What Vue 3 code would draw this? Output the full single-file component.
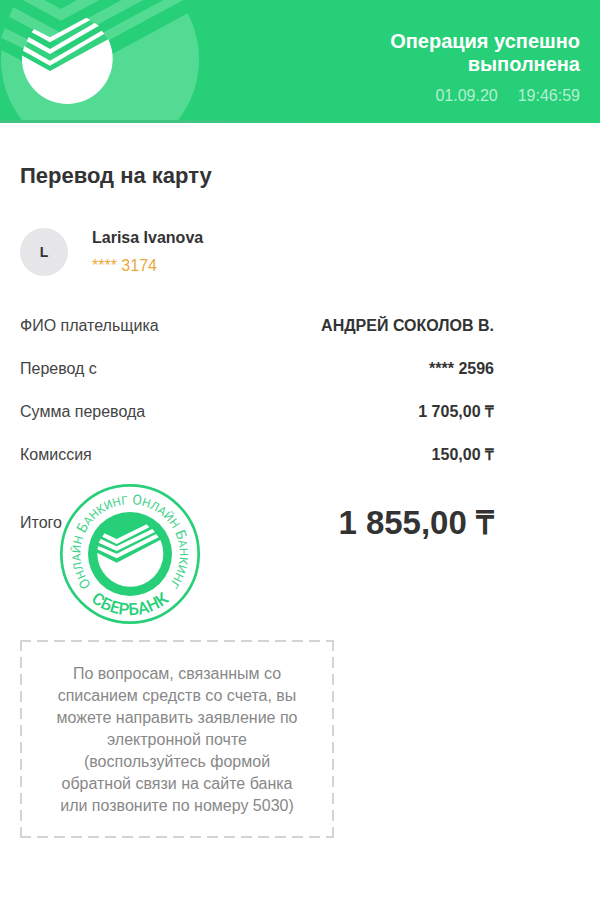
<script setup>
import { ref } from 'vue'

const receipt = ref({
  status: 'Операция успешно выполнена',
  date: '01.09.20',
  time: '19:46:59',
  title: 'Перевод на карту',
  name: 'Larisa Ivanova',
  card: '**** 3174',
  total: '1 855,00 ₸'
})

const rows = ref([
  { label: 'ФИО плательщика', value: 'АНДРЕЙ СОКОЛОВ В.' },
  { label: 'Перевод с', value: '**** 2596' },
  { label: 'Сумма перевода', value: '1 705,00 ₸' },
  { label: 'Комиссия', value: '150,00 ₸' }
])
</script>

<template>
  <main class="receipt">
    <header class="header">
      <svg class="logo" width="200" height="123" viewBox="0 0 600 369" aria-hidden="true">
        <defs>
          <clipPath id="big-circle"><circle cx="300" cy="178" r="297" /></clipPath>
          <clipPath id="small-circle"><circle cx="202" cy="176" r="136" /></clipPath>
        </defs>
        <g fill="#53db94">
          <path d="M68 0H133L183 27L230 0H298L183 62Z" />
          <path d="M40 22L183 98L365 0H430L183 133L27 50Z" />
          <path d="M14 84L183 166L490 0H550L183 198L4 114Z" />
          <path clip-path="url(#big-circle)" d="M0 148L183 245L566 38L600 20V360H0Z" />
        </g>
        <path fill="#27cf78" d="M98 88L150 113L262 53L325 118L150 213L66 168Z" opacity="0.7" />
        <g fill="#fff">
          <path d="M102 87L150 112L259 53L271 60L150 127L95 97Z" />
          <path d="M86 111L150 147L284 69L297 77L150 162L80 124Z" />
          <path d="M73 138L150 182L305 92L313 101L150 197L69 152Z" />
          <path clip-path="url(#small-circle)" d="M60 163L150 213L325 118L345 125V320H60Z" />
        </g>
      </svg>
      <div class="status">
        <h1>{{ receipt.status }}</h1>
        <p><span>{{ receipt.date }}</span><span>{{ receipt.time }}</span></p>
      </div>
    </header>

    <section class="content">
      <h2>{{ receipt.title }}</h2>

      <div class="person">
        <div class="avatar">L</div>
        <div class="person-info">
          <strong>{{ receipt.name }}</strong>
          <span>{{ receipt.card }}</span>
        </div>
      </div>

      <dl class="details">
        <div class="row" v-for="row in rows" :key="row.label">
          <dt>{{ row.label }}</dt>
          <dd>{{ row.value }}</dd>
        </div>
        <div class="row total">
          <dt>Итого</dt>
          <dd>{{ receipt.total }}</dd>
          <!-- round bank stamp, lies over the total row -->
          <svg class="stamp" width="142" height="142" viewBox="0 0 426 426" aria-hidden="true">
            <defs>
              <path id="stamp-top" d="M97 306A149 149 0 1 1 309 327" />
              <path id="stamp-bottom" d="M63 319A184 184 0 0 0 363 319" />
              <clipPath id="stamp-circle"><circle cx="214" cy="212" r="99" /></clipPath>
            </defs>
            <circle cx="213" cy="213" r="206" fill="none" stroke="#27cf78" stroke-width="8" />
            <circle cx="213" cy="213" r="126" fill="#27cf78" />
            <g fill="#fff">
              <path d="M136 151L173 168L263 124L271 133L173 183L130 161Z" />
              <path d="M125 168L173 190L280 138L288 147L173 204L119 179Z" />
              <path d="M118 189L173 212L291 153L299 163L173 226L115 199Z" />
              <path clip-path="url(#stamp-circle)" d="M110 207L173 239L315 165V330H100Z" />
            </g>
            <text class="stamp-small"><textPath href="#stamp-top">О<tspan class="caps">НЛАЙН</tspan> Б<tspan class="caps">АНКИНГ</tspan> О<tspan class="caps">НЛАЙН</tspan> Б<tspan class="caps">АНКИНГ</tspan></textPath></text>
            <text class="stamp-name"><textPath href="#stamp-bottom" startOffset="50%" text-anchor="middle">СБЕРБАНК</textPath></text>
          </svg>
        </div>
      </dl>

      <p class="notice">
        По вопросам, связанным со списанием средств со счета, вы можете направить заявление по электронной почте (воспользуйтесь формой обратной связи на сайте банка или позвоните по номеру 5030)
      </p>
    </section>
  </main>
</template>

<style>
body {
  background: #fff;
}
</style>

<style scoped>
.receipt {
  font-family: "Liberation Sans", Arial, sans-serif;
  font-size: 16px;
  color: #333;
}

h1, h2, p, dl, dd {
  margin: 0;
}

.header {
  display: flex;
  justify-content: space-between;
  background: #27cf78 linear-gradient(90deg, #3fc582 50%, #27cf78) bottom left / 60% 3px no-repeat;
}
.logo {
  display: block;
  flex: none;
}
.status {
  width: 220px;
  padding: 30px 20px 0 0;
  text-align: right;
}
.status h1 {
  font-size: 20px;
  line-height: 23px;
  color: #fff;
}
.status p {
  display: flex;
  justify-content: flex-end;
  gap: 20px;
  margin-top: 10px;
  line-height: 20px;
  color: #b5f0d0;
}

.content {
  padding: 39px 20px 20px;
}
h2 {
  font-size: 22px;
  line-height: 28px;
}

.person {
  display: flex;
  align-items: center;
  gap: 24px;
  margin-top: 34px;
}
.avatar {
  display: flex;
  align-items: center;
  justify-content: center;
  width: 48px;
  height: 48px;
  border-radius: 50%;
  background: #e6e6e9;
  font-size: 14px;
  font-weight: bold;
}
.person-info {
  display: flex;
  flex-direction: column;
  line-height: 28px;
}
.person-info span {
  color: #e9a93c;
}

.details {
  max-width: 474px;
  margin-top: 24px;
}
.row {
  display: flex;
  justify-content: space-between;
  align-items: center;
  line-height: 43px;
}
.row dt {
  color: #444;
}
.row dd {
  font-weight: bold;
}
.total {
  position: relative;
  line-height: 94px;
}
.total dd {
  font-size: 33px;
}
.stamp {
  position: absolute;
  left: 39px;
  top: 7px;
}
.stamp-small {
  font-family: Roboto, sans-serif;
  font-size: 42px;
  fill: #45d28b;
}
.stamp-small .caps {
  font-size: 35px;
}
.stamp-name {
  font-family: Roboto, sans-serif;
  font-size: 50px;
  font-weight: 500;
  fill: #27cf78;
}

.notice {
  --dash: #d4d4d4 0 11px, transparent 11px 17px;
  max-width: 250px;
  margin-top: 70px;
  padding: 23px 32px 21px;
  background:
    repeating-linear-gradient(90deg, var(--dash)) top / 100% 2px no-repeat,
    repeating-linear-gradient(90deg, var(--dash)) bottom / 100% 2px no-repeat,
    repeating-linear-gradient(var(--dash)) left / 2px 100% no-repeat,
    repeating-linear-gradient(var(--dash)) right / 2px 100% no-repeat;
  line-height: 22px;
  text-align: center;
  color: #888;
}
</style>
